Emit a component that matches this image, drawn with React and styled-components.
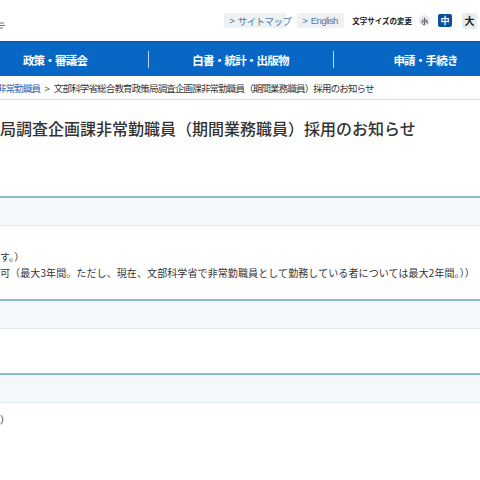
import React from "react";
import styled, { createGlobalStyle } from "styled-components";

const Global = createGlobalStyle`
  html, body { margin: 0; padding: 0; background: #fff; }
  body {
    font-family: "Noto Sans CJK JP", "Noto Sans", sans-serif;
    color: #333;
    overflow: hidden;
    width: 480px;
    height: 480px;
  }
`;

const Header = styled.header`
  height: 41px;
  display: flex;
  align-items: center;
  justify-content: space-between;
  padding-right: 3px;
`;

const LogoTail = styled.div`
  width: 6px;
  height: 10px;
  margin-top: 10px;
  overflow: hidden;
  display: flex;
  justify-content: flex-end;
`;

const Utils = styled.div`
  display: flex;
  align-items: center;
`;

const UtilLink = styled.a`
  display: flex;
  align-items: center;
  height: 15px;
  width: ${(p) => p.$w}px;
  padding-left: 5px;
  box-sizing: border-box;
  background: #eef0f1;
  color: #4d79b0;
  font-size: 9.5px;
  letter-spacing: -0.6px;
  white-space: nowrap;
  text-decoration: none;
  margin-right: ${(p) => p.$mr}px;
  font-family: ${(p) => (p.$latin ? '"Liberation Sans", sans-serif' : "inherit")};
`;

const Chev = styled.span`
  font-family: "Liberation Sans", sans-serif;
  margin-right: 3px;
  letter-spacing: 0;
`;

const SizeLabel = styled.span`
  font-size: 7.5px;
  font-weight: 700;
  color: #222;
  letter-spacing: 0;
  white-space: nowrap;
  margin-right: 7px;
`;

const SizeBtn = styled.span`
  display: flex;
  align-items: center;
  justify-content: center;
  box-sizing: border-box;
  width: ${(p) => p.$w}px;
  height: ${(p) => p.$h}px;
  border-radius: ${(p) => p.$r};
  background: ${(p) => (p.$active ? "#0b4e9e" : "#e6ecee")};
  color: ${(p) => (p.$active ? "#fff" : "#222")};
  font-size: ${(p) => p.$fs}px;
  font-weight: 700;
  margin-right: ${(p) => p.$mr || 0}px;
`;

const NavWrap = styled.nav`
  display: flex;
  justify-content: center;
  height: 34px;
  background: #0867c5;
  border-top: 1px solid #0552a3;
  overflow: hidden;
`;

const NavGrid = styled.ul`
  list-style: none;
  margin: 0;
  padding: 0;
  flex-shrink: 0;
  display: grid;
  grid-template-columns: repeat(3, 185px);
  align-items: center;
`;

const NavItem = styled.li`
  display: flex;
  align-items: center;
  justify-content: center;
  height: 17px;
  color: #fff;
  font-size: 11.5px;
  font-weight: 700;
  letter-spacing: -0.8px;
  border-left: ${(p) => (p.$sep ? "1px solid rgba(255,255,255,0.75)" : "none")};
  margin-top: 1px;
`;

const Crumbs = styled.div`
  padding: 5px 0 3px;
  border-bottom: 1px solid #dedede;
  line-height: 14px;
  font-size: 9.5px;
  letter-spacing: -0.85px;
  white-space: nowrap;
  margin-left: -3px;
  color: #333;
`;

const CrumbLink = styled.a`
  color: #1d5fae;
  text-decoration: none;
`;

const CrumbSep = styled.span`
  color: #555;
  margin: 0 4px;
  font-family: "Liberation Sans", sans-serif;
  letter-spacing: 0;
`;

const Title = styled.h1`
  margin: 16px 0 0;
  font-size: 16px;
  line-height: 24px;
  font-weight: 500;
  color: #333;
  white-space: nowrap;
  height: 80px;
`;

const Band = styled.div`
  height: 27px;
  background: #f3f9fb;
  border-top: 2px solid #88bbcb;
  border-bottom: 1px solid #e6ecee;
`;

const Body = styled.div`
  padding: ${(p) => p.$pad};
  height: ${(p) => p.$h}px;
  box-sizing: border-box;
  font-size: 10px;
  line-height: 16px;
  letter-spacing: 0.1px;
  color: #333;
  white-space: nowrap;
`;

const Line = styled.div`
  height: 16px;
`;

function Section({ children, pad, h }) {
  return (
    <section>
      <Band />
      <Body $pad={pad} $h={h}>
        {children}
      </Body>
    </section>
  );
}

export default function App() {
  return (
    <>
      <Global />
      <Header>
        <LogoTail>
          <svg width="6" height="8" viewBox="0 0 6 8">
            <path d="M0 2h4M0 4.5h5M0 7h3" stroke="#777" strokeWidth="1" />
          </svg>
        </LogoTail>
        <Utils>
          <UtilLink $w={62} $mr={11}><Chev>&gt;</Chev>サイトマップ</UtilLink>
          <UtilLink $w={47} $mr={8} $latin><Chev>&gt;</Chev>English</UtilLink>
          <SizeLabel>文字サイズの変更</SizeLabel>
          <SizeBtn $w={11} $h={11} $r="50%" $fs={6.5} $mr={8}>小</SizeBtn>
          <SizeBtn $w={14} $h={13} $r="2px" $fs={9} $mr={10} $active>中</SizeBtn>
          <SizeBtn $w={15} $h={16} $r="2px" $fs={10}>大</SizeBtn>
        </Utils>
      </Header>
      <NavWrap>
        <NavGrid>
          <NavItem>政策・審議会</NavItem>
          <NavItem $sep>白書・統計・出版物</NavItem>
          <NavItem $sep>申請・手続き</NavItem>
        </NavGrid>
      </NavWrap>
      <Crumbs>
        <CrumbLink>非常勤職員</CrumbLink>
        <CrumbSep>&gt;</CrumbSep>
        文部科学省総合教育政策局調査企画課非常勤職員（期間業務職員）採用のお知らせ
      </Crumbs>
      <Title>局調査企画課非常勤職員（期間業務職員）採用のお知らせ</Title>
      <Section pad="7px 0 0" h={73}>
        <Line />
        <Line>す。）</Line>
        <Line>可（最大3年間。ただし、現在、文部科学省で非常勤職員として勤務している者については最大2年間。））</Line>
      </Section>
      <Section pad="0" h={44} />
      <Section pad="9px 0 0" h={77}>
        <Line>）</Line>
      </Section>
    </>
  );
}
